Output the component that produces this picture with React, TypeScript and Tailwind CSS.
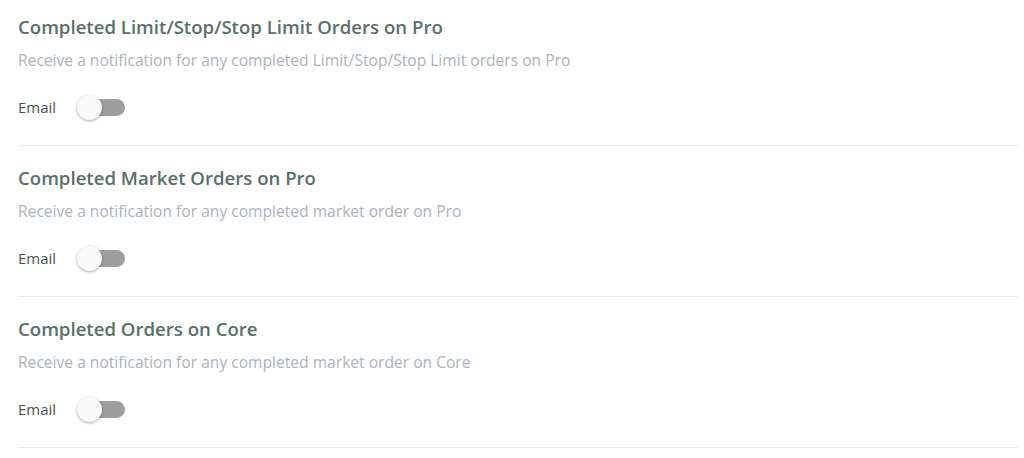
const items = [
  {
    title: "Completed Limit/Stop/Stop Limit Orders on Pro",
    desc: "Receive a notification for any completed Limit/Stop/Stop Limit orders on Pro",
  },
  {
    title: "Completed Market Orders on Pro",
    desc: "Receive a notification for any completed market order on Pro",
  },
  {
    title: "Completed Orders on Core",
    desc: "Receive a notification for any completed market order on Core",
  },
]

const Toggle = () => (
  <div className="relative flex items-center w-[48px] h-[25px]">
    <div className="ml-[6px] w-[42px] h-[17px] rounded-full bg-[#9e9e9e]" />
    {/* thumb */}
    <div className="absolute left-0 top-0 w-[25px] h-[25px] rounded-full bg-[#fafafa] shadow-[0_1px_3px_rgba(0,0,0,0.35)]" />
  </div>
)

export default function App() {
  return (
    <div className="min-h-screen bg-white px-[18px] font-['Open_Sans',sans-serif]">
      <div className="mt-[-5px] w-[1000px]">
        {items.map((item) => (
          <section key={item.title} className="pt-[20px] pb-[25px] border-b border-[#ececec]">
            <h3 className="text-[18.6px] leading-[24px] font-semibold text-[#587069]">{item.title}</h3>
            <p className="mt-[10px] text-[15.6px] leading-[22px] text-[#abb3ba]">{item.desc}</p>
            <div className="mt-[24px] flex items-center gap-[21px] h-[25px]">
              <span className="text-[15px] text-[#4a5452]">Email</span>
              <Toggle />
            </div>
          </section>
        ))}
      </div>
    </div>
  )
}
